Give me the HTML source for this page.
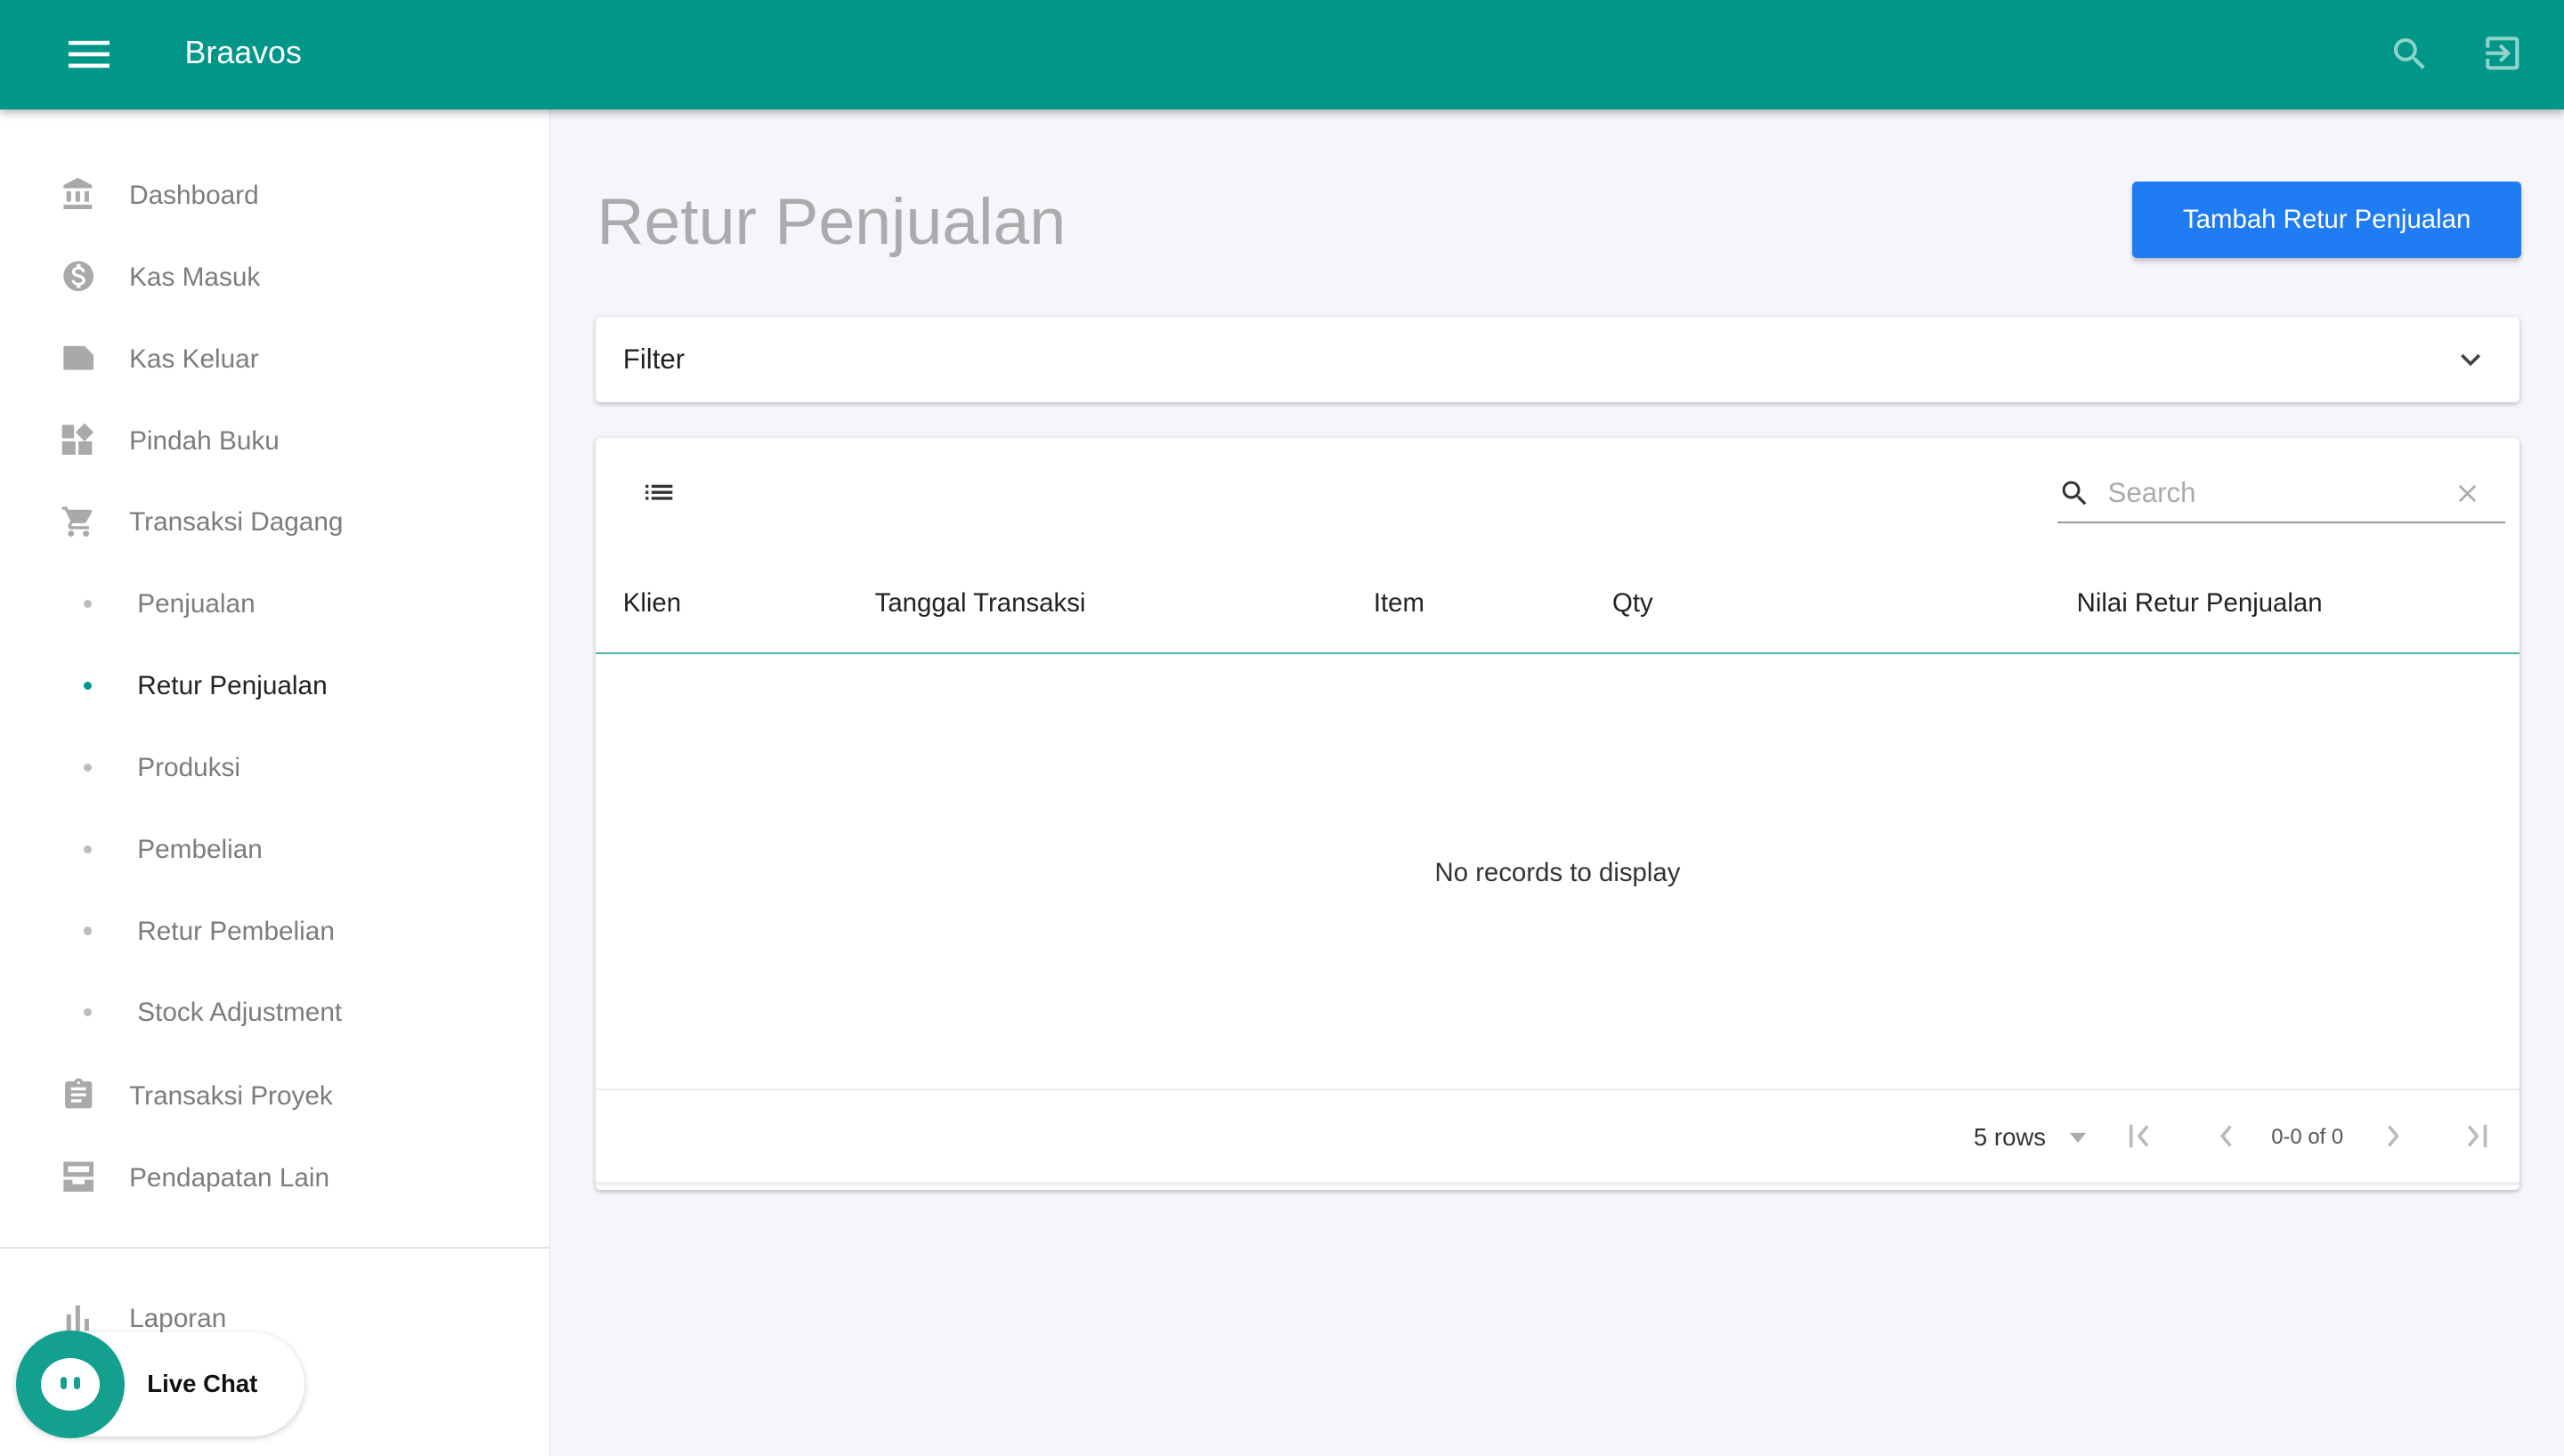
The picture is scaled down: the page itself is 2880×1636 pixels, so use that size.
<!DOCTYPE html>
<html><head><meta charset="utf-8"><style>
html,body{margin:0;padding:0;width:2880px;height:1636px;overflow:hidden;background:#f5f5fb}
#w{zoom:1.836735;width:1568px;height:891px;position:relative;font-family:"Liberation Sans",sans-serif;background:#f5f5fb;overflow:hidden}
.a{position:absolute}
.hdr{left:0;top:0;width:1568px;height:67px;background:#009688;box-shadow:0 2px 5px rgba(0,0,0,.3);z-index:3}
.side{left:0;top:67px;width:336px;height:824px;background:#fff;border-right:1px solid #e2e2e2}
.it{position:absolute;left:79px;font-size:16.2px;color:#7c7c7c;line-height:20px;margin-top:1px}
.sub{left:84px}
.dot{position:absolute;left:51px;width:5px;height:5px;border-radius:50%;background:#bdbdbd}
.ic{position:absolute;left:37px}
.card{background:#fff;box-shadow:0 1px 3px rgba(0,0,0,.25);border-radius:3px}
.th{position:absolute;top:360px;font-size:16px;color:#222}
</style></head><body><div id="w">
<div class="a hdr">
 <svg class="a" style="left:42px;top:24px" width="25" height="18"><rect y="1" width="25" height="2.5" fill="#fff"/><rect y="8" width="25" height="2.5" fill="#fff"/><rect y="15" width="25" height="2.5" fill="#fff"/></svg>
 <div class="a" style="left:113px;top:21px;font-size:19.5px;color:#fff">Braavos</div>
 <svg class="a" style="left:1461px;top:20px" width="26" height="26" viewBox="0 0 24 24"><path fill="#8fd3cc" d="M15.5 14h-.79l-.28-.27A6.470 6.470 0 0016 9.5 6.5 6.5 0 109.5 16c1.61 0 3.090-.59 4.230-1.570l.27.28v.79l5 4.990L20.490 19l-4.990-5zm-6 0C7.010 14 5 11.990 5 9.5S7.010 5 9.5 5 14 7.010 14 9.5 11.990 14 9.5 14z"/></svg>
 <svg class="a" style="left:1517px;top:19px" width="27" height="27" viewBox="0 0 24 24"><path fill="#8fd3cc" d="M10.09 15.59L11.5 17l5-5-5-5-1.41 1.41L12.67 11H3v2h9.67l-2.58 2.59zM19 3H5a2 2 0 00-2 2v4h2V5h14v14H5v-4H3v4a2 2 0 002 2h14c1.1 0 2-.9 2-2V5c0-1.1-.9-2-2-2z"/></svg>
</div>
<div class="a side">
 <svg class="ic" style="top:41px" width="22" height="22" viewBox="0 0 24 24"><path fill="#a9a9a9" d="M4 10v7h3v-7H4zm6 0v7h3v-7h-3zM2 22h19v-3H2v3zm14-12v7h3v-7h-3zm-4.5-9L2 6v2h19V6l-9.5-5z"/></svg>
 <div class="it" style="top:42px">Dashboard</div>
 <svg class="ic" style="top:91px" width="22" height="22" viewBox="0 0 24 24"><path fill="#a9a9a9" d="M12 2C6.48 2 2 6.48 2 12s4.48 10 10 10 10-4.48 10-10S17.52 2 12 2zm1.41 16.09V20h-2.67v-1.93c-1.71-.36-3.16-1.46-3.27-3.4h1.96c.1 1.05.82 1.87 2.65 1.87 1.96 0 2.4-.98 2.4-1.59 0-.83-.44-1.61-2.67-2.14-2.480-.6-4.180-1.620-4.180-3.670 0-1.720 1.390-2.840 3.110-3.210V4h2.670v1.950c1.860.45 2.790 1.860 2.850 3.390H14.3c-.05-1.110-.64-1.870-2.220-1.870-1.5 0-2.4.68-2.4 1.640 0 .84.65 1.390 2.670 1.910s4.180 1.390 4.180 3.910c-.01 1.830-1.380 2.830-3.120 3.160z"/></svg>
 <div class="it" style="top:92px">Kas Masuk</div>
 <svg class="ic" style="top:141px" width="22" height="22" viewBox="0 0 24 24"><path fill="#a9a9a9" d="M2 5a1 1 0 011-1h13l6 6v9a1 1 0 01-1 1H3a1 1 0 01-1-1z"/></svg>
 <div class="it" style="top:142px">Kas Keluar</div>
 <svg class="ic" style="top:191px" width="22" height="22" viewBox="0 0 24 24"><path fill="#a9a9a9" d="M1 2h8v9H1zM1 13h9v9H1zM12 13h9v9h-9zM16 1l6 6-6 6-6-6z"/></svg>
 <div class="it" style="top:192px">Pindah Buku</div>
 <svg class="ic" style="top:241px" width="22" height="22" viewBox="0 0 24 24"><path fill="#a9a9a9" d="M7 18c-1.1 0-1.99.9-1.99 2S5.9 22 7 22s2-.9 2-2-.9-2-2-2zM1 2v2h2l3.6 7.59-1.35 2.45c-.16.28-.25.61-.25.96 0 1.1.9 2 2 2h12v-2H7.42c-.14 0-.25-.11-.25-.25l.03-.12.9-1.63h7.45c.75 0 1.41-.41 1.75-1.03l3.58-6.49A1 1 0 0020 4H5.21l-.94-2H1zm16 16c-1.1 0-1.99.9-1.99 2s.89 2 1.99 2 2-.9 2-2-.9-2-2-2z"/></svg>
 <div class="it" style="top:242px">Transaksi Dagang</div>
 <div class="dot" style="top:300px"></div><div class="it sub" style="top:292px">Penjualan</div>
 <div class="dot" style="top:350px;background:#009688"></div><div class="it sub" style="top:342px;color:#222">Retur Penjualan</div>
 <div class="dot" style="top:400px"></div><div class="it sub" style="top:392px">Produksi</div>
 <div class="dot" style="top:450px"></div><div class="it sub" style="top:442px">Pembelian</div>
 <div class="dot" style="top:500px"></div><div class="it sub" style="top:492px">Retur Pembelian</div>
 <div class="dot" style="top:550px"></div><div class="it sub" style="top:542px">Stock Adjustment</div>
 <svg class="ic" style="top:592px" width="22" height="22" viewBox="0 0 24 24"><path fill="#a9a9a9" d="M19 3h-4.18C14.4 1.84 13.3 1 12 1s-2.4.84-2.82 2H5c-1.1 0-2 .9-2 2v14c0 1.1.9 2 2 2h14c1.1 0 2-.9 2-2V5c0-1.1-.9-2-2-2zm-7 0c.55 0 1 .45 1 1s-.45 1-1 1-1-.45-1-1 .45-1 1-1zm2 14H7v-2h7v2zm3-4H7v-2h10v2zm0-4H7V7h10v2z"/></svg>
 <div class="it" style="top:593px">Transaksi Proyek</div>
 <svg class="ic" style="top:642px" width="22" height="22" viewBox="0 0 24 24"><path fill="#a9a9a9" d="M2 2h20v10H2zM2 14h6v3h8v-3h6v8H2z"/><rect x="5" y="5" width="14" height="4" fill="#fff"/></svg>
 <div class="it" style="top:643px">Pendapatan Lain</div>
 <div class="a" style="left:0;top:696px;width:336px;height:1px;background:#e0e0e0"></div>
 <svg class="ic" style="top:728px" width="22" height="22" viewBox="0 0 24 24"><path fill="#a9a9a9" d="M4 10h3v11H4zM10 4h3v17h-3zM16 13h3v8h-3z"/></svg>
 <div class="it" style="top:729px">Laporan</div>
</div>
<div class="a" style="left:10px;top:815px;width:176px;height:64px;border-radius:32px;background:#fff;box-shadow:0 1px 4px rgba(0,0,0,.2);z-index:4">
 <div class="a" style="left:0;top:-1px;width:66px;height:66px;border-radius:50%;background:#13a08f"></div>
 <div class="a" style="left:15px;top:16px;width:36px;height:32px;border-radius:50%;background:#fff"></div>
 <div class="a" style="left:27px;top:27px;width:4px;height:8px;border-radius:2px;background:#13a08f"></div>
 <div class="a" style="left:35px;top:27px;width:4px;height:8px;border-radius:2px;background:#13a08f"></div>
 <div class="a" style="left:80px;top:23px;font-size:15px;font-weight:bold;color:#111">Live Chat</div>
</div>
<div class="a" style="left:365px;top:112px;font-size:40px;color:#ababab">Retur Penjualan</div>
<div class="a" style="left:1304px;top:111px;width:238px;height:47px;background:#1f7cf3;border-radius:3px;box-shadow:0 2px 3px rgba(0,0,0,.2);color:#fff;font-size:16px;line-height:47px;text-align:center">Tambah Retur Penjualan</div>
<div class="a card" style="left:364px;top:194px;width:1177px;height:52px">
 <div class="a" style="left:17px;top:16px;font-size:17px;color:#222">Filter</div>
 <svg class="a" style="left:1135px;top:14px" width="24" height="24" viewBox="0 0 24 24"><path fill="#444" d="M7.41 8.59L12 13.17l4.59-4.58L18 10l-6 6-6-6z"/></svg>
</div>
<div class="a card" style="left:364px;top:268px;width:1177px;height:460px">
 <svg class="a" style="left:28px;top:22px" width="22" height="22" viewBox="0 0 24 24"><path fill="#333" d="M3 13h2v-2H3v2zm0 4h2v-2H3v2zm0-8h2V7H3v2zm4 4h14v-2H7v2zm0 4h14v-2H7v2zM7 7v2h14V7H7z"/></svg>
 <svg class="a" style="left:895px;top:24px" width="20" height="20" viewBox="0 0 24 24"><path fill="#333" d="M15.5 14h-.79l-.28-.27A6.47 6.47 0 0016 9.5 6.5 6.5 0 109.5 16c1.61 0 3.09-.59 4.23-1.57l.27.28v.79l5 4.99L20.49 19l-4.99-5zm-6 0C7.01 14 5 11.99 5 9.5S7.01 5 9.5 5 14 7.01 14 9.5 11.99 14 9.5 14z"/></svg>
 <div class="a" style="left:925px;top:24px;font-size:17px;color:#aaa">Search</div>
 <svg class="a" style="left:1136px;top:25px" width="18" height="18" viewBox="0 0 24 24"><path fill="#aaa" d="M19 6.41L17.59 5 12 10.59 6.41 5 5 6.41 10.59 12 5 17.59 6.41 19 12 13.41 17.59 19 19 17.59 13.41 12z"/></svg>
 <div class="a" style="left:894px;top:51px;width:274px;height:1px;background:#999"></div>
 <div class="th" style="left:17px;top:92px">Klien</div>
 <div class="th" style="left:171px;top:92px">Tanggal Transaksi</div>
 <div class="th" style="left:476px;top:92px">Item</div>
 <div class="th" style="left:622px;top:92px">Qty</div>
 <div class="th" style="left:906px;top:92px">Nilai Retur Penjualan</div>
 <div class="a" style="left:0;top:131px;width:1177px;height:1px;background:#4db6ac"></div>
 <div class="a" style="left:0;top:257px;width:1177px;text-align:center;font-size:16px;color:#333">No records to display</div>
 <div class="a" style="left:0;top:398px;width:1177px;height:1px;background:#ececec"></div>
 <div class="a" style="left:843px;top:419px;font-size:15px;color:#333">5 rows</div>
 <svg class="a" style="left:901px;top:424px" width="12" height="8"><path d="M1 1h10L6 7z" fill="#aaa"/></svg>
 <svg class="a" style="left:937px;top:418px" width="18" height="18" viewBox="0 0 18 18"><path d="M2 2v14" stroke="#bbb" stroke-width="2"/><path d="M12 3L7 9l5 6" stroke="#bbb" stroke-width="2" fill="none"/></svg>
 <svg class="a" style="left:990px;top:418px" width="14" height="18" viewBox="0 0 14 18"><path d="M10 3L5 9l5 6" stroke="#bbb" stroke-width="2" fill="none"/></svg>
 <div class="a" style="left:1025px;top:420px;font-size:13px;color:#555">0-0 of 0</div>
 <svg class="a" style="left:1093px;top:418px" width="14" height="18" viewBox="0 0 14 18"><path d="M4 3l5 6-5 6" stroke="#bbb" stroke-width="2" fill="none"/></svg>
 <svg class="a" style="left:1141px;top:418px" width="18" height="18" viewBox="0 0 18 18"><path d="M15 2v14" stroke="#bbb" stroke-width="2"/><path d="M5 3l5 6-5 6" stroke="#bbb" stroke-width="2" fill="none"/></svg>
 <div class="a" style="left:0;top:455px;width:1177px;height:2px;background:#efefef"></div>
</div>
</div></body></html>
